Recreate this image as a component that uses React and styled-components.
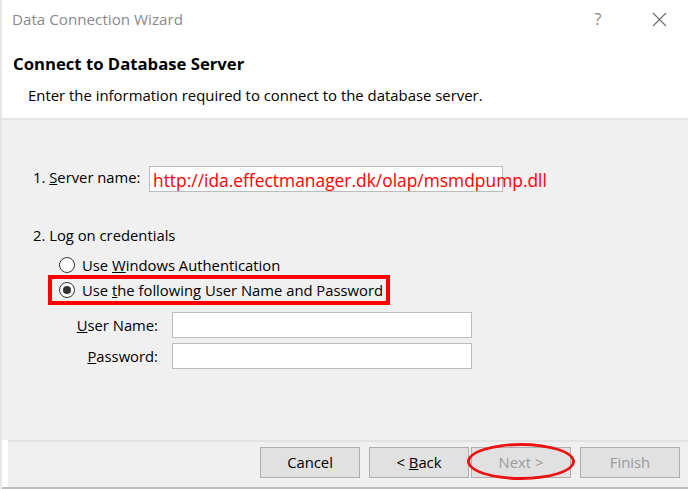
import React from "react";
import styled, { createGlobalStyle } from "styled-components";

const Global = createGlobalStyle`
  html, body { margin: 0; padding: 0; background: #ffffff; }
  body { font-family: "Open Sans", "Noto Sans", "Liberation Sans", sans-serif; }
  * { box-sizing: border-box; }
`;

const Window = styled.div`
  width: 688px;
  height: 489px;
  display: flex;
  flex-direction: column;
  border-left: 2px solid #e6e6e6;
  background: #ffffff;
  overflow: hidden;
`;

const TitleBar = styled.div`
  height: 40px;
  display: flex;
  align-items: center;
  padding: 0 0 2px 10px;
  background: #ffffff;
`;

const TitleText = styled.div`
  flex: 1;
  font-size: 15.2px;
  color: #8a8a8a;
`;

const TitleButton = styled.div`
  width: ${(p) => p.$w}px;
  display: flex;
  justify-content: center;
  align-items: center;
  color: #858585;
  font-size: 16px;
`;

const Header = styled.div`
  height: 80px;
  padding: 13px 0 0 11px;
  background: #ffffff;
  border-bottom: 2px solid #e4e4e4;
`;

const Heading = styled.div`
  font-size: 16.7px;
  font-weight: 700;
  color: #000;
  line-height: 22px;
`;

const Subtitle = styled.div`
  margin: 10px 0 0 15px;
  font-size: 14.9px;
  color: #000;
  line-height: 20px;
`;

const Body = styled.div`
  flex: 1;
  background: #f0f0f0;
  padding: 46px 0 0 31px;
  display: flex;
  flex-direction: column;
`;

const Label = styled.div`
  font-size: 14.8px;
  color: #000;
  line-height: 20px;
  white-space: nowrap;
  width: ${(p) => (p.$w ? `${p.$w}px` : "auto")};
  text-align: ${(p) => p.$align || "left"};
  padding-bottom: ${(p) => p.$raise || 0}px;
`;

const ServerRow = styled.div`
  display: flex;
  align-items: center;
  height: 26px;
`;

const TextBox = styled.div`
  width: ${(p) => p.$w}px;
  height: 26px;
  background: #ffffff;
  border: 1px solid #bcbcbc;
  display: flex;
  align-items: center;
  padding-left: 3px;
  white-space: nowrap;
  overflow: visible;
`;

const UrlText = styled.span`
  color: #ff0000;
  font-size: 17.4px;
  line-height: 22px;
  margin-top: 2px;
`;

const SectionLabel = styled(Label)`
  margin-top: 33px;
`;

const RadioGroup = styled.div`
  margin: 9px 0 0 19px;
  display: flex;
  flex-direction: column;
  gap: 3px;
  align-items: flex-start;
`;

const RadioRow = styled.div`
  display: flex;
  align-items: center;
  gap: 7px;
  height: 22px;
  padding: 0 3px 0 7px;
  outline: ${(p) => (p.$highlight ? "4px solid #ff0000" : "none")};
`;

const RadioCircle = styled.span`
  width: 16px;
  height: 16px;
  border-radius: 50%;
  border: 1px solid #333333;
  background: #ffffff;
  display: flex;
  align-items: center;
  justify-content: center;
  &::after {
    content: "";
    width: 8px;
    height: 8px;
    border-radius: 50%;
    background: ${(p) => (p.$checked ? "#333333" : "transparent")};
  }
`;

const CredGrid = styled.div`
  margin: 11px 0 0 27px;
  display: grid;
  grid-template-columns: 98px 300px;
  column-gap: 14px;
  row-gap: 5px;
  align-items: center;
`;

const Footer = styled.div`
  height: 47px;
  background: #f0f0f0;
  border-top: 2px solid #e2e2e2;
  margin-left: 6px;
  padding: 5px 8px 0 0;
  display: flex;
  justify-content: flex-end;
  align-items: flex-start;
`;

const BottomEdge = styled.div`
  height: 2px;
  background: #bdbdbd;
  margin-left: -2px;
`;

const ButtonWrap = styled.div`
  position: relative;
  margin-left: ${(p) => p.$gap}px;
`;

const Button = styled.div`
  width: 100px;
  height: 31px;
  background: #e1e1e1;
  border: 1px solid #adadad;
  display: flex;
  align-items: center;
  justify-content: center;
  font-size: 14.8px;
  padding-bottom: 2px;
  color: ${(p) => (p.$disabled ? "#9a9a9a" : "#000000")};
`;

const Ellipse = styled.div`
  position: absolute;
  left: -4px;
  top: -4px;
  width: 108px;
  height: 37px;
  border: 3px solid #ee1111;
  border-radius: 50%;
  pointer-events: none;
`;

export default function App() {
  return (
    <>
      <Global />
      <Window>
        <TitleBar>
          <TitleText>Data Connection Wizard</TitleText>
          <TitleButton $w={64}>?</TitleButton>
          <TitleButton $w={58}>
            <svg width="15" height="15" viewBox="0 0 15 15">
              <path d="M1 1 L14 14 M14 1 L1 14" stroke="#6a6a6a" strokeWidth="1.1" fill="none" />
            </svg>
          </TitleButton>
        </TitleBar>
        <Header>
          <Heading>Connect to Database Server</Heading>
          <Subtitle>Enter the information required to connect to the database server.</Subtitle>
        </Header>
        <Body>
          <ServerRow>
            <Label $w={116} $raise={5}>
              1. <u>S</u>erver name:
            </Label>
            <TextBox $w={354}>
              <UrlText>http://ida.effectmanager.dk/olap/msmdpump.dll</UrlText>
            </TextBox>
          </ServerRow>
          <SectionLabel>2. Log on credentials</SectionLabel>
          <RadioGroup>
            <RadioRow>
              <RadioCircle />
              <Label>
                Use <u>W</u>indows Authentication
              </Label>
            </RadioRow>
            <RadioRow $highlight>
              <RadioCircle $checked />
              <Label>
                Use <u>t</u>he following User Name and Password
              </Label>
            </RadioRow>
          </RadioGroup>
          <CredGrid>
            <Label $align="right">
              <u>U</u>ser Name:
            </Label>
            <TextBox $w={300} />
            <Label $align="right">
              <u>P</u>assword:
            </Label>
            <TextBox $w={300} />
          </CredGrid>
        </Body>
        <Footer>
          <ButtonWrap $gap={0}>
            <Button>Cancel</Button>
          </ButtonWrap>
          <ButtonWrap $gap={9}>
            <Button>
              &lt;&nbsp;<u>B</u>ack
            </Button>
          </ButtonWrap>
          <ButtonWrap $gap={2}>
            <Button $disabled>Next &gt;</Button>
            <Ellipse />
          </ButtonWrap>
          <ButtonWrap $gap={9}>
            <Button $disabled>Finish</Button>
          </ButtonWrap>
        </Footer>
        <BottomEdge />
      </Window>
    </>
  );
}
